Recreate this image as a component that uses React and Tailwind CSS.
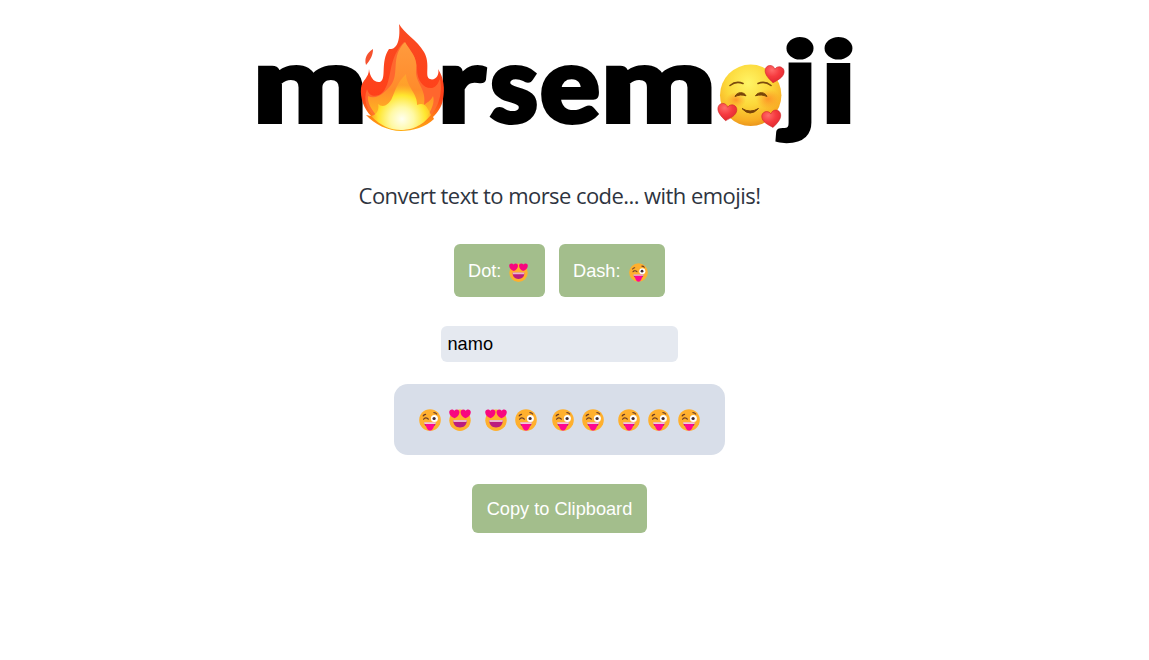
import React from 'react';

function HeartEyes({ className }) {
  return (
    <svg viewBox="0 0 22 22" className={className} aria-label="heart eyes">
      <circle cx="11" cy="11.3" r="10.7" fill="#ffb02e" />
      <path d="M4.2 11.2h13.6c0 4.6-2.6 7.2-6.8 7.2s-6.8-2.6-6.8-7.2z" fill="#bb1d80" />
      <path d="M4.2 10.9h13.6l-.3 2.2H4.5z" fill="#e9b5cf" />
      <path d="M5.6 9.3C2.7 8.2.2 6 .2 3.2.2.3 3.8-.5 5.3 1.8 7-.3 10.6.5 10.4 3.5 10.3 6 8.2 8.2 5.6 9.3z" fill="#f8077f" />
      <path d="M16.4 9.3c2.9-1.1 5.4-3.3 5.4-6.1 0-2.9-3.6-3.7-5.1-1.4C15-.3 11.4.5 11.6 3.5c.1 2.5 2.2 4.7 4.8 5.8z" fill="#f8077f" />
    </svg>
  );
}

function WinkTongue({ className }) {
  return (
    <svg viewBox="0 0 22 22" className={className} aria-label="winking with tongue">
      <circle cx="11" cy="11" r="10.8" fill="#ffb02e" />
      <circle cx="15.4" cy="9.5" r="3.5" fill="#fff" />
      <circle cx="15.1" cy="9.5" r="1.6" fill="#402a32" />
      <path d="M4.6 10.2c.9-1.7 3.6-1.7 4.7 0M4.2 6.9c.5-.8 1.3-1.3 2.4-1.5M14.9 3.6c1.2 0 2.1.4 2.8 1.4" stroke="#6a3b28" strokeWidth="1.2" fill="none" strokeLinecap="round" />
      <path d="M5.2 13.7h11.6c-.2 2.7-2 4.6-5.8 4.6s-5.6-1.9-5.8-4.6z" fill="#bb1d80" />
      <path d="M5.1 13.3h11.8l-.3 1.6H5.4z" fill="#f1cbd9" />
      <path d="M6.9 15h8.2c0 3-1.5 6.6-4.1 6.6S6.9 18 6.9 15z" fill="#ff0890" />
    </svg>
  );
}

function Heart({ x, y, r }) {
  return (
    <path
      transform={`translate(${x} ${y}) rotate(${r})`}
      d="M0 9.3C-4.5 6-9.5 2.5-9.5-2.4-9.5-8-2.2-9.3 0-4.3 2.2-9.3 9.5-8 9.5-2.4 9.5 2.5 4.5 6 0 9.3z"
      fill="url(#heart)"
      stroke="#cf292b"
      strokeWidth=".6"
    />
  );
}

const letters = [
  ['m', 253, 114, 104],
  ['r', 438, 47, 104],
  ['s', 490, 48, 104],
  ['e', 540, 60, 104],
  ['m', 601, 115, 104],
  ['j', 783, 34, 110],
  ['i', 821, 35, 110],
];

function Logo() {
  return (
    <svg viewBox="240 10 640 150" className="h-[150px] w-[640px] shrink-0">
      <defs>
        <linearGradient id="flame" x1="0" y1="0" x2="0" y2="1">
          <stop offset="0" stopColor="#f94b22" />
          <stop offset=".7" stopColor="#ff4019" />
          <stop offset="1" stopColor="#ffae13" />
        </linearGradient>
        <linearGradient id="mid" x1="0" y1="0" x2="0" y2="1">
          <stop offset="0" stopColor="#ff9b3e" />
          <stop offset=".55" stopColor="#ff8b2b" />
          <stop offset="1" stopColor="#ffd21c" />
        </linearGradient>
        <radialGradient id="core" gradientUnits="userSpaceOnUse" cx="402" cy="119" r="34">
          <stop offset="0" stopColor="#fffff0" />
          <stop offset=".35" stopColor="#fff9a5" />
          <stop offset=".7" stopColor="#ffe62f" />
          <stop offset="1" stopColor="#ffc526" stopOpacity=".35" />
        </radialGradient>
        <radialGradient id="face" cx=".46" cy=".3" r=".72">
          <stop offset="0" stopColor="#fff566" />
          <stop offset=".5" stopColor="#fcd83a" />
          <stop offset=".85" stopColor="#f8ae24" />
          <stop offset="1" stopColor="#e8921b" />
        </radialGradient>
        <radialGradient id="blush">
          <stop offset="0" stopColor="#ff7b22" stopOpacity=".7" />
          <stop offset="1" stopColor="#ff8b22" stopOpacity="0" />
        </radialGradient>
        <radialGradient id="heart" cx=".35" cy=".25" r=".8">
          <stop offset="0" stopColor="#ff6c6a" />
          <stop offset=".5" stopColor="#f63b40" />
          <stop offset="1" stopColor="#df272e" />
        </radialGradient>
      </defs>
      <g className="font-['Lato'] font-black" fill="#000" stroke="#000" strokeWidth="4">
        {letters.map(([c, x, w, size], i) => (
          <text key={i} x={x} y="122" fontSize={size} textLength={w} lengthAdjust="spacingAndGlyphs">{c}</text>
        ))}
      </g>
      <path d="M399 24C404 33 417 40 424 52C431 64 424 77 430 79C435 81 440 75 438 69C444 78 445 89 443 99C442 107 437 113 433 117L434 119C426 127 413 131 401 131C388 131 374 124 366 115L371 116C364 109 360 98 361 88C362 80 369 78 369 69C370 77 374 83 380 82C387 79 380 62 389 49C395 50 401 44 399 24z" fill="url(#flame)" />
      <path d="M373 49C373 56 370 60 366 65C364 58 367 53 373 49z" fill="#f5512e" />
      <path d="M404 42C410 50 417 57 417 69C417 81 424 89 432 88C438 86 438 82 440 79C443 93 439 111 423 123C409 134 391 131 377 119C366 109 363 100 367 89C369 97 377 98 383 92C393 80 387 59 404 42z" fill="#ff7637" opacity=".7" />
      <path d="M405 42C410 51 418 57 416 70C415 83 427 89 424 105C426 103 431 101 433 96C436 105 427 119 417 126C403 133 386 128 377 116C371 109 367 102 368 96C377 101 386 91 391 85C400 73 390 57 405 42z" fill="url(#mid)" />
      <path d="M406 74C406 86 418 94 417 105C425 102 427 107 431 115C421 127 411 130 401 130C390 130 381 126 371 116C374 116 380 112 378 104C384 109 390 103 392 98C396 89 397 83 406 74z" fill="url(#core)" />
      <path d="M402 94C409 100 412 108 420 114C417 121 411 128 402 130C393 128 386 121 382 113C391 109 397 102 402 94z" fill="url(#core)" />

      <ellipse cx="750.7" cy="95.3" rx="30.7" ry="30.7" fill="url(#face)" />
      <ellipse cx="736" cy="100" rx="10" ry="8" fill="url(#blush)" />
      <ellipse cx="768" cy="99" rx="12" ry="10" fill="url(#blush)" />
      <path d="M730 85.5Q736 80.5 743 83.5M758 83.5Q765 80.5 771 85.5" fill="none" stroke="#7b4b0c" strokeWidth="1.6" strokeLinecap="round" />
      <path d="M735 96.5C737 91.5 744 91.5 746 95.8C742 94.5 739 94.8 735 96.5zM755.5 95.8C758 91.5 765 91.5 767 96.5C763 94.8 759.5 94.5 755.5 95.8z" fill="#794509" stroke="#794509" strokeLinejoin="round" />
      <path d="M742 108.5Q750 117.5 758.5 108.5Q750 113.5 742 108.5z" fill="#774209" stroke="#774209" strokeWidth="1" strokeLinejoin="round" />
      <Heart x={774.3} y={73.5} r={8} />
      <Heart x={727} y={111.5} r={9} />
      <Heart x={771.6} y={118.2} r={-9} />
    </svg>
  );
}

const code = [[1, 0], [0, 1], [1, 1], [1, 1, 1]];

export default function App() {
  return (
    <main className="flex h-[660px] w-[1119px] flex-col items-center bg-white pt-[10px] font-['Liberation_Sans',sans-serif] text-[18.2px]">
      <h1 aria-label="morsemoji" className="flex"><Logo /></h1>
      <p className="mt-[17px] flex h-9 items-center justify-center whitespace-nowrap font-['Open_Sans',sans-serif] text-[22px] font-normal tracking-[-0.56px] text-[#2e3440]">
        Convert text to morse code... with emojis!
      </p>
      <div className="mt-[31px] flex gap-[14px] text-white">
        <button className="flex h-[53px] w-[91px] items-center rounded-md bg-[#a3be8c] pl-[14px] pt-[3px]">
          Dot:<HeartEyes className="ml-[8px] size-[19px]" />
        </button>
        <button className="flex h-[53px] w-[106px] items-center rounded-md bg-[#a3be8c] pl-[14px] pt-[3px]">
          Dash:<WinkTongue className="ml-[8px] size-[19px]" />
        </button>
      </div>
      <input defaultValue="namo" className="mt-[29px] h-9 w-[237px] rounded-md bg-[#e5e9f0] px-[6.5px] text-black outline-none" />
      <div className="mt-[22px] flex h-[71px] w-[331px] items-center justify-center gap-[14.3px] rounded-[14px] bg-[#d8dee9] pt-[1px]">
        {code.map((symbols, i) => (
          <div key={i} className="flex gap-[8.1px]">
            {symbols.map((s, j) => s ? <WinkTongue key={j} className="size-[22px]" /> : <HeartEyes key={j} className="size-[22px]" />)}
          </div>
        ))}
      </div>
      <button className="mt-[29px] h-[49px] w-[175px] whitespace-nowrap rounded-md bg-[#a3be8c] pt-[2px] text-white">Copy to Clipboard</button>
    </main>
  );
}
